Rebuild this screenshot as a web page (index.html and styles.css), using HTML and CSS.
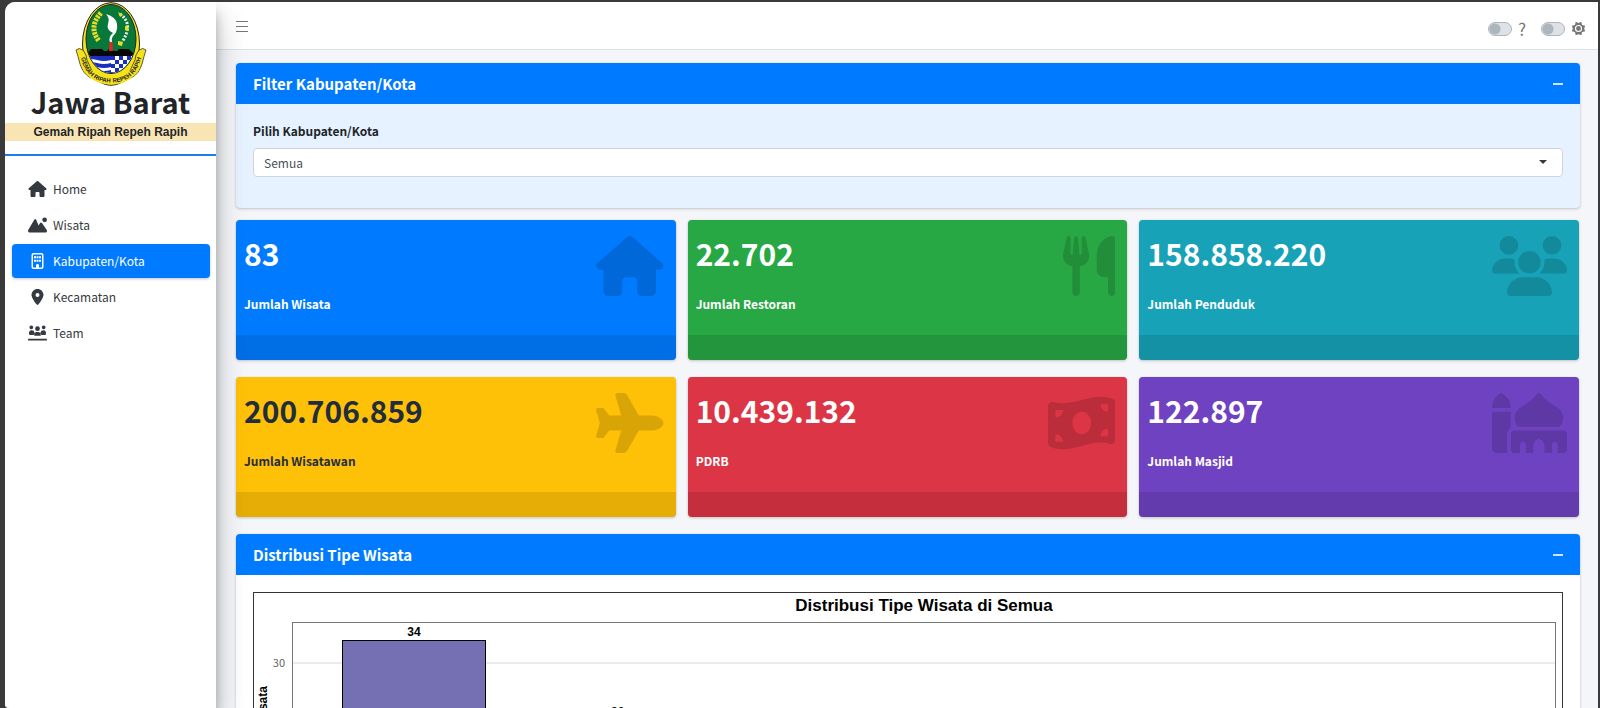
FILE: index.html
```html
<!DOCTYPE html>
<html lang="id">
<head>
<meta charset="utf-8">
<title>Jawa Barat</title>
<link rel="stylesheet" href="styles.css">
</head>
<body>
<div class="app">
  <aside class="sidebar">
    <div class="brand">
      <svg class="emblem" viewBox="0 0 72 84" role="img" aria-label="Lambang Jawa Barat">
        <defs>
          <clipPath id="oval"><ellipse cx="36" cy="37" rx="24.500" ry="34"/></clipPath>
          <path id="motto" d="M6 56Q12 80.500 36 80.500T66 56"/>
        </defs>
        <ellipse cx="36" cy="42" rx="28.500" ry="41.300" fill="#f6e21a" stroke="#222" stroke-width="1"/>
        <path d="M1 48q3-3 7 0q4 5 4 10l6 13l-2 5q-8-4-11-14q-2-8-4-14zM71 48q-3-3-7 0q-4 5-4 10l-6 13l2 5q8-4 11-14q2-8 4-14z" fill="#f6e21a" stroke="#333" stroke-width=".8"/>
        <path d="M12 62Q20 76 36 76T60 62L64 68Q54 82.500 36 82.500T8 68z" fill="#f6e21a"/>
        <ellipse cx="36" cy="37" rx="25" ry="34.500" fill="#08783a" stroke="#222" stroke-width="1"/>
        <g clip-path="url(#oval)">
          <rect y="53" width="72" height="30" fill="#fff"/>
          <path d="M8 54h28v4q-7 2-14 0t-14 0zM8 61q7-2 14 0t14 0v4q-7 2-14 0t-14 0zM8 68q7-2 14 0t14 0v4q-7 2-14 0t-14 0z" fill="#1a2fc0"/>
          <path d="M36 54h4v4h-4zM44 54h4v4h-4zM52 54h4v4h-4zM60 54h4v4h-4zM40 58h4v4h-4zM48 58h4v4h-4zM56 58h4v4h-4zM36 62h4v4h-4zM44 62h4v4h-4zM52 62h4v4h-4zM40 66h4v4h-4zM48 66h4v4h-4zM56 66h4v4h-4zM36 70h4v4h-4zM44 70h4v4h-4z" fill="#1a2fc0"/>
          <path d="M8 54v-2l5-1 3-4h11l2 2h3l2-2h3l2 2h3l2-2h10l4 4 5 1v2z" fill="#080808"/>
        </g>
        <path d="M34.500 40h3l.5 9h-4z" fill="#e3261f"/>
        <path d="M35 40q-2-5 3-9q-7-3-5-9t-2-10q10 3 11 10q1 7-3 11q-3 3-2 7z" fill="#fff"/>
        <path d="M26 11q-13 14-2 28" fill="none" stroke="#e8dc25" stroke-width="5" stroke-dasharray="2.500 1"/>
        <path d="M45 12q14 10 2 28" fill="none" stroke="#e9f1e5" stroke-width="3" stroke-dasharray="2 1.500"/>
        <path d="M43 10l5 3-3 2zM50 24l4 1-1 4-3-1zM43 39l5 1-1 4-4-1z" fill="#e8dc25"/>
        <text class="motto-ring"><textPath href="#motto" startOffset="50%">GEMAH RIPAH REPEH RAPIH</textPath></text>
      </svg>
      <h1 class="brand-name">Jawa Barat</h1>
      <p class="brand-motto">Gemah Ripah Repeh Rapih</p>
    </div>
    <nav class="menu">
      <a class="menu-item" href="#home"><svg class="menu-icon" viewBox="0 0 576 512"><use href="#i-house"/></svg>Home</a>
      <a class="menu-item" href="#wisata"><svg class="menu-icon" viewBox="0 0 640 512"><path d="M560 160A80 80 0 1 0 560 0a80 80 0 1 0 0 160zM55.900 512H584c31 0 56-25 56-56c0-11-3-21-9-30L471 190c-7-11-19-18-31-18s-24 6-31 17l-52 80L272 71c-6-11-16-17-28-17s-22 6-28 17L7 425c-5 8-7 17-7 27c0 33 25 60 55.900 60z"/></svg>Wisata</a>
      <a class="menu-item active" href="#kabupaten"><svg class="menu-icon" viewBox="0 0 384 512"><path fill-rule="evenodd" d="M64 0h256c35 0 64 29 64 64v384c0 35-29 64-64 64H64c-35 0-64-29-64-64V64C0 29 29 0 64 0zm0 48c-9 0-16 7-16 16v384c0 9 7 16 16 16h80v-64c0-27 21-48 48-48s48 21 48 48v64h80c9 0 16-7 16-16V64c0-9-7-16-16-16zM80 104h64v64H80zm80 0h64v64h-64zm80 0h64v64h-64zM80 216h64v64H80zm80 0h64v64h-64zm80 0h64v64h-64z"/></svg>Kabupaten/Kota</a>
      <a class="menu-item" href="#kecamatan"><svg class="menu-icon" viewBox="0 0 384 512"><path fill-rule="evenodd" d="M215.700 499.200C267 435 384 279.400 384 192C384 86 298 0 192 0S0 86 0 192c0 87.400 117 243 168.300 307.200c12.300 15.300 35.100 15.300 47.400 0zM192 128a64 64 0 1 1 0 128 64 64 0 1 1 0-128z"/></svg>Kecamatan</a>
      <a class="menu-item" href="#team"><svg class="menu-icon" viewBox="0 0 640 512"><path d="M112 0a64 64 0 1 1 0 128A64 64 0 1 1 112 0zM528 0a64 64 0 1 1 0 128A64 64 0 1 1 528 0zM320 32a80 80 0 1 1 0 160 80 80 0 1 1 0-160zM32 256c0-55 38-96 80-96c32 0 56 8 80 22c8 40 24 62 40 74c-20 14-34 36-40 64H64c-18 0-32-20-32-64zM608 256c0-55-38-96-80-96c-32 0-56 8-80 22c-8 40-24 62-40 74c20 14 34 36 40 64h128c18 0 32-20 32-64zM208 330c0-62 38-106 80-106h64c42 0 80 44 80 106c0 12-10 22-22 22H230c-12 0-22-10-22-22zM32 448h576c18 0 32 14 32 32s-14 32-32 32H32c-18 0-32-14-32-32s14-32 32-32z"/></svg>Team</a>
    </nav>
  </aside>

  <div class="page">
    <header class="topbar">
      <button class="icon-button" type="button" aria-label="Menu"><svg class="bars" viewBox="0 0 12 12"><path d="M0 1.500h12M0 6.500h12M0 11.500h12"/></svg></button>
      <div class="tools">
        <label class="tool"><input class="switch" type="checkbox" aria-label="Bantuan"><span class="help">?</span></label>
        <label class="tool"><input class="switch" type="checkbox" aria-label="Tema"><svg class="gear" viewBox="0 0 16 16"><path fill-rule="evenodd" d="M5 .8 8 2 11 .8l.8 3.400L15.200 5 14 8l1.200 3-3.400.8-.8 3.400L8 14l-3 1.200-.8-3.400L.8 11 2 8 .8 5l3.400-.8zM8 4.200a3.800 3.800 0 1 0 0 7.600 3.800 3.800 0 1 0 0-7.600zM8 5.400a2.600 2.600 0 1 1 0 5.200 2.600 2.600 0 1 1 0-5.200z"/></svg></label>
      </div>
    </header>

    <main class="content">
      <section class="card filter-card">
        <header class="card-header"><h2 class="card-title">Filter Kabupaten/Kota</h2><button class="collapse" type="button" aria-label="Ciutkan"></button></header>
        <div class="card-body">
          <label class="field-label" for="wilayah">Pilih Kabupaten/Kota</label>
          <div class="select-wrap">
            <select class="select" id="wilayah"><option>Semua</option></select>
            <svg class="caret" viewBox="0 0 8 4"><path d="M0 0h8L4 4z"/></svg>
          </div>
        </div>
      </section>

      <div class="stats">
        <article class="stat blue"><div class="stat-main"><p class="stat-value">83</p><p class="stat-label">Jumlah Wisata</p></div><svg class="stat-icon" viewBox="0 0 576 512"><path id="i-house" d="M575.800 255.500c0 18-15 32.100-32 32.100h-32l.7 160.200c0 2.700-.2 5.400-.5 8.100V472c0 22.100-17.900 40-40 40H392c-22.100 0-40-17.900-40-40V384c0-17.700-14.300-32-32-32H256c-17.700 0-32 14.300-32 32v88c0 22.100-17.900 40-40 40H104c-22.100 0-40-17.900-40-40V287.600H32c-18 0-32-14-32-32.100c0-9 3-17 10-24L266.400 8c7-7 15-8 22-8s15 2 21 7L564.800 231.500c8 7 12 15 11 24z"/></svg><div class="stat-foot"></div></article>

        <article class="stat green"><div class="stat-main"><p class="stat-value">22.702</p><p class="stat-label">Jumlah Restoran</p></div><svg class="stat-icon" viewBox="0 0 448 512"><path d="M416 0C400 0 288 32 288 176V288c0 35.300 28.700 64 64 64h32V480c0 17.700 14.300 32 32 32s32-14.300 32-32V32c0-17.700-14.300-32-32-32zM64 16C64 7.800 57.900 1 49.700 .1S34.200 4.600 32.400 12.500L2.100 148.800C.7 155.100 0 161.500 0 167.900c0 45.900 35.100 83.600 80 87.700V480c0 17.700 14.300 32 32 32s32-14.300 32-32V255.600c44.900-4.100 80-41.800 80-87.700c0-6.400-.7-12.800-2.100-19.100L191.600 12.500c-1.800-8-9.300-13.300-17.400-12.400S160 7.800 160 16V150.200c0 5.400-4.400 9.800-9.800 9.800c-5.100 0-9.300-3.900-9.800-9L127.900 14.600C127.200 6.300 120.300 0 112 0s-15.200 6.300-15.900 14.600L83.700 151c-.5 5.100-4.700 9-9.800 9c-5.400 0-9.800-4.400-9.800-9.800V16z"/></svg><div class="stat-foot"></div></article>

        <article class="stat teal"><div class="stat-main"><p class="stat-value">158.858.220</p><p class="stat-label">Jumlah Penduduk</p></div><svg class="stat-icon" viewBox="0 0 640 512"><path d="M144 0a80 80 0 1 1 0 160A80 80 0 1 1 144 0zM512 0a80 80 0 1 1 0 160A80 80 0 1 1 512 0zM0 298.700C0 239.800 47.800 192 106.700 192h42.700c15.900 0 31 3.500 44.600 9.700c-1.300 7.200-1.900 14.700-1.900 22.300c0 38.200 16.800 72.500 43.300 96H21.300C9.600 320 0 310.400 0 298.700zM405.300 320c26-23.500 42.700-57.800 42.700-96c0-7.600-.7-15-1.900-22.300c13.600-6.300 28.700-9.700 44.600-9.700h42.700C592.200 192 640 239.800 640 298.700c0 11.800-9.600 21.300-21.300 21.300H405.300zM224 224a96 96 0 1 1 192 0 96 96 0 1 1 -192 0zM128 485.300C128 411.700 187.700 352 261.300 352H378.700C452.300 352 512 411.700 512 485.300c0 14.700-11.900 26.700-26.700 26.700H154.700c-14.700 0-26.700-11.900-26.700-26.700z"/></svg><div class="stat-foot"></div></article>

        <article class="stat yellow"><div class="stat-main"><p class="stat-value">200.706.859</p><p class="stat-label">Jumlah Wisatawan</p></div><svg class="stat-icon" viewBox="0 0 576 512"><path d="M482.300 192c34.200 0 93.700 29 93.700 64c0 36-59.500 64-93.700 64l-116.600 0L265.200 495.900c-5.700 10-16.300 16.100-27.800 16.100l-56.200 0c-10.600 0-18.300-10.200-15.400-20.400l49-171.600L112 320 68.800 377.600c-3 4-7.800 6.400-12.800 6.400l-42 0c-7.800 0-14-6.300-14-14c0-1.300 .2-2.600 .5-3.900L32 256 .5 145.900c-.4-1.300-.5-2.600-.5-3.900c0-7.800 6.300-14 14-14l42 0c5 0 9.800 2.400 12.800 6.400L112 192l102.900 0-49-171.600C162.900 10.200 170.600 0 181.200 0l56.200 0c11.500 0 22.100 6.200 27.800 16.100L365.700 192l116.600 0z"/></svg><div class="stat-foot"></div></article>

        <article class="stat red"><div class="stat-main"><p class="stat-value">10.439.132</p><p class="stat-label">PDRB</p></div><svg class="stat-icon" viewBox="0 0 576 512"><path fill-rule="evenodd" d="M0 112.500V422.300c0 18 10.100 35 27 41.300c87 32.500 174 10.300 261-11.900c79.800-20.300 159.600-40.700 239.300-18.900c23 6.300 48.700-9.500 48.700-33.400V89.700c0-18-10.100-35-27-41.300C462 15.900 375 38.100 288 60.300C208.200 80.600 128.400 100.900 48.700 79.100C25.600 72.800 0 88.600 0 112.500zM288 352c-44.200 0-80-43-80-96s35.800-96 80-96s80 43 80 96s-35.800 96-80 96zM64 352c35.300 0 64 28.700 64 64H64V352zm64-208c0 35.300-28.700 64-64 64V144h64zM512 304v64H448c0-35.300 28.700-64 64-64zM448 96h64v64c-35.300 0-64-28.700-64-64z"/></svg><div class="stat-foot"></div></article>

        <article class="stat purple"><div class="stat-main"><p class="stat-value">122.897</p><p class="stat-label">Jumlah Masjid</p></div><svg class="stat-icon" viewBox="0 0 640 512"><path d="M400 0c5 0 9.800 2.400 12.800 6.400c34.700 46.300 78.100 74.900 133.500 111.500c5.200 3.400 10.500 7 16 10.600c28.900 19.200 45.700 51.700 45.700 86.100c0 28.600-11.300 54.500-29.800 73.400H221.800c-18.400-19-29.800-44.900-29.800-73.400c0-34.400 16.700-66.900 45.700-86.100c5.400-3.600 10.800-7.100 16-10.600c55.400-36.500 98.900-65.200 133.500-111.500C390.200 2.400 395 0 400 0zM160 352c0-17.700 14.300-32 32-32H608c17.700 0 32 14.300 32 32V480c0 17.700-14.300 32-32 32H560V440c0-13.300-10.700-24-24-24s-24 10.700-24 24v72H448V454c0-19-8.400-37-23-49.200L400 384l-25 20.800C360.400 417 352 435 352 454v58H288V440c0-13.300-10.700-24-24-24s-24 10.700-24 24v72H192c-17.700 0-32-14.300-32-32V352zM70.400 5.200c5.700-4.300 13.500-4.300 19.200 0l16 12C139.800 42.900 160 83.200 160 126v2H0v-2C0 83.200 20.200 42.900 54.400 17.200l16-12zM0 160H160V296.600c-19.100 11.100-32 31.700-32 55.400V480c0 9.600 2.100 18.600 5.800 26.800c-6.600 3.400-14 5.200-21.800 5.200H48c-26.500 0-48-21.500-48-48V160z"/></svg><div class="stat-foot"></div></article>
      </div>

      <section class="card">
        <header class="card-header"><h2 class="card-title">Distribusi Tipe Wisata</h2><button class="collapse" type="button" aria-label="Ciutkan"></button></header>
        <div class="card-body">
          <div class="chart">
            <div class="axis-title">Jumlah Wisata</div>
            <div class="axis-ticks"><span>30</span></div>
            <h3 class="chart-title">Distribusi Tipe Wisata di Semua</h3>
            <div class="plot">
              <div class="bar-col"><span class="bar-value">34</span><div class="bar" style="height:194px"></div></div>
              <div class="bar-col"><span class="bar-value">20</span><div class="bar" style="height:114px"></div></div>
            </div>
          </div>
        </div>
      </section>
    </main>
  </div>
</div>
</body>
</html>
```
FILE: styles.css
```css
* { box-sizing: border-box; }

body {
  margin: 0;
  padding: 2px 2px 0 5px;
  background: #3a3a3a;
  color: #212529;
  font: 12px/20px "Noto Sans CJK SC", "Noto Sans", sans-serif;
}

h1, h2, h3, p { margin: 0; }

.app {
  display: flex;
  height: calc(100vh - 2px);
  overflow: hidden;
  background: #f4f6f9;
  border-radius: 10px 0 0 4px;
}

/* Sidebar */
.sidebar {
  flex: 0 0 211px;
  z-index: 1;
  background: #fff;
  box-shadow: 0 14px 28px rgba(0, 0, 0, .25), 0 10px 10px rgba(0, 0, 0, .22);
}

.brand {
  display: flex;
  flex-direction: column;
  align-items: center;
  padding-bottom: 13px;
  border-bottom: 2px solid #1a7fe8;
}

.emblem { width: 72px; height: 84px; }

.motto-ring {
  font: bold 6px "Liberation Sans", Arial, sans-serif;
  text-anchor: middle;
  fill: #222;
}

.brand-name {
  padding-bottom: 7px;
  font-size: 29px;
  line-height: 30px;
}

.brand-motto {
  align-self: stretch;
  background: #f9e4b3;
  font: bold 12px/18px "Liberation Sans", Arial, sans-serif;
  text-align: center;
}

.menu {
  display: flex;
  flex-direction: column;
  gap: 2px;
  padding: 16px 6px 16px 7px;
}

.menu-item {
  display: flex;
  align-items: center;
  gap: 6px;
  height: 34px;
  padding-left: 16px;
  border-radius: 4px;
  color: #343a40;
  text-decoration: none;
}

.menu-item.active {
  background: #007bff;
  color: #fff;
  box-shadow: 0 1px 3px rgba(0, 0, 0, .24);
}

.menu-icon { width: 19px; height: 16px; fill: currentColor; }

/* Top bar */
.page {
  flex: 1;
  min-width: 0;
  overflow: hidden;
}

.topbar {
  display: flex;
  justify-content: space-between;
  align-items: center;
  height: 48px;
  padding: 0 12px 0 20px;
  background: #fff;
  border-bottom: 1px solid #dee2e6;
}

.icon-button {
  padding: 0;
  border: 0;
  background: none;
}

.bars { display: block; width: 12px; height: 12px; stroke: #777; stroke-width: 1; }

.tools { display: flex; gap: 15px; padding-top: 6px; }

.tool { display: flex; align-items: center; gap: 6px; }

.switch {
  appearance: none;
  width: 24px;
  height: 14px;
  margin: 0;
  border: 1px solid #adb5bd;
  border-radius: 7px;
  background: radial-gradient(circle at 6px 6px, #adb5bd 5px, transparent 6px), #dee2e6;
}

.help { color: #777; font-size: 17px; }

.gear { width: 15px; height: 15px; fill: #777; }

/* Cards */
.content {
  display: flex;
  flex-direction: column;
  padding: 13px 18px 12px 20px;
}

.card {
  border-radius: 4px;
  background: #fff;
  box-shadow: 0 0 1px rgba(0, 0, 0, .13), 0 1px 3px rgba(0, 0, 0, .2);
}

.filter-card { background: #e6f2ff; }

.card-header {
  display: flex;
  justify-content: space-between;
  align-items: center;
  height: 41px;
  padding: 0 17px;
  border-radius: 4px 4px 0 0;
  background: #007bff;
  color: #fff;
}

.card-title { font-size: 15px; line-height: 20px; }

.collapse {
  width: 10px;
  height: 2px;
  padding: 0;
  border: 0;
  background: #cce5ff;
}

.card-body { padding: 17px; }

.field-label {
  display: block;
  margin-bottom: 7px;
  font-weight: bold;
}

.select-wrap { position: relative; margin-bottom: 14px; }

.select {
  appearance: none;
  display: block;
  width: 100%;
  height: 29px;
  padding: 0 10px;
  border: 1px solid #ced4da;
  border-radius: 4px;
  background: #fff;
  color: #495057;
  font: inherit;
}

.caret {
  position: absolute;
  top: 12px;
  right: 16px;
  width: 8px;
  height: 4px;
  fill: #343a40;
  pointer-events: none;
}

/* Stat boxes */
.stats {
  display: grid;
  grid-template-columns: repeat(3, 1fr);
  gap: 17px 12px;
  margin: 12px 1px 17px 0;
}

.stat {
  display: grid;
  grid-template-columns: 1fr auto;
  overflow: hidden;
  border-radius: 4px;
  color: #fff;
  box-shadow: 0 0 1px rgba(0, 0, 0, .13), 0 1px 3px rgba(0, 0, 0, .2);
}

.stat-main { padding: 13px 8px 21px; }

.stat-value {
  margin-bottom: 21px;
  font-size: 30px;
  font-weight: bold;
  line-height: 40px;
}

.stat-label { font-weight: bold; }

.stat-icon {
  height: 60px;
  margin: 16px 12px 0 0;
  fill: rgba(0, 0, 0, .15);
}

.stat-foot {
  grid-column: 1 / -1;
  height: 25px;
  background: rgba(0, 0, 0, .1);
}

.blue { background: #007bff; }
.green { background: #28a745; }
.teal { background: #17a2b8; }
.yellow { background: #ffc107; color: #1f2d3d; }
.red { background: #dc3545; }
.purple { background: #6f42c1; }

/* Bar chart */
.chart {
  display: grid;
  grid-template: 29px 213px / 18px 20px 1fr;
  padding: 0 6px 24px 0;
  border: 1px solid #333;
  color: #000;
  font-family: "Liberation Sans", Arial, sans-serif;
}

.chart-title {
  grid-column: 3;
  grid-row: 1;
  font-size: 17px;
  line-height: 26px;
  text-align: center;
}

.axis-title {
  grid-column: 1;
  grid-row: 2;
  writing-mode: vertical-rl;
  transform: rotate(180deg);
  font-size: 12px;
  font-weight: bold;
  line-height: 18px;
  text-align: center;
}

.axis-ticks {
  grid-column: 2;
  grid-row: 2;
  padding: 30px 7px 0 0;
  color: #666;
  font: 11px/20px "Noto Sans CJK SC", sans-serif;
  text-align: right;
}

.plot {
  display: flex;
  align-items: flex-end;
  grid-column: 3;
  grid-row: 2;
  padding-left: 1.5%;
  border: 1px solid #777;
  background: linear-gradient(#ebebeb, #ebebeb) 0 39px / 100% 2px no-repeat;
}

.bar-col {
  display: flex;
  flex: 0 0 16.4%;
  flex-direction: column;
  align-items: center;
}

.bar-value {
  font-size: 12px;
  font-weight: bold;
  line-height: 16px;
}

.bar {
  width: 71%;
  border: 1px solid #000;
  background: #756fb3;
}
```
